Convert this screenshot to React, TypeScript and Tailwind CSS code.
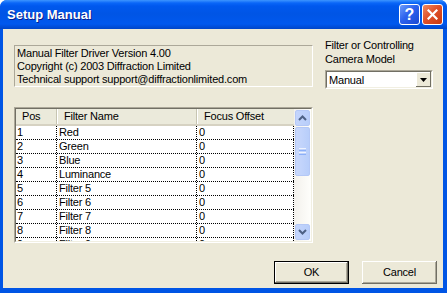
const rows = [
  ["1", "Red", "0"],
  ["2", "Green", "0"],
  ["3", "Blue", "0"],
  ["4", "Luminance", "0"],
  ["5", "Filter 5", "0"],
  ["6", "Filter 6", "0"],
  ["7", "Filter 7", "0"],
  ["8", "Filter 8", "0"],
  ["9", "Filter 9", "0"],
]

function TitleButton({ kind }: { kind: "help" | "close" }) {
  const bg =
    kind === "help"
      ? "bg-[linear-gradient(135deg,#6d9cfb_0%,#2c62ee_45%,#1a48d2_100%)]"
      : "bg-[linear-gradient(135deg,#f08a62_0%,#e0512a_45%,#c9380f_100%)]"
  return (
    <div className={`w-[21px] h-[21px] rounded-[3px] border border-white flex items-center justify-center ${bg}`}>
      {kind === "help" ? (
        <span className="text-white font-bold text-[16px] leading-none font-['Liberation_Sans',Arial,sans-serif]">?</span>
      ) : (
        <svg width="11" height="11" viewBox="0 0 11 11">
          <path d="M1.5 1.5 L9.5 9.5 M9.5 1.5 L1.5 9.5" stroke="white" strokeWidth="2.2" strokeLinecap="square" />
        </svg>
      )}
    </div>
  )
}

function ScrollButton({ dir }: { dir: "up" | "down" }) {
  return (
    <div className="h-[16px] w-full rounded-[2px] border border-[#b4c8f6] bg-[linear-gradient(to_right,#c4d5fc,#b8cefa)] flex items-center justify-center">
      <svg width="9" height="6" viewBox="0 0 9 6">
        <path
          d={dir === "up" ? "M1 5 L4.5 1.5 L8 5" : "M1 1 L4.5 4.5 L8 1"}
          stroke="#4d6185"
          strokeWidth="2"
          fill="none"
        />
      </svg>
    </div>
  )
}

export default function App() {
  return (
    <div className="w-[447px] h-[293px] flex flex-col bg-[#0055e5] rounded-t-[7px] overflow-hidden font-['Liberation_Sans',Arial,sans-serif] text-[11px] text-black">
      {/* title bar */}
      <div className="h-[29px] shrink-0 flex items-center pl-[7px] pr-[4px] bg-[linear-gradient(to_bottom,#3d95ff_0px,#0a66f8_3px,#0058ee_6px,#0055e5_14px,#0058ee_24px,#0045c8_29px)]">
        <span className="text-white font-bold text-[13px] [text-shadow:1px_1px_#0a1e8c]">Setup Manual</span>
        <div className="ml-auto flex gap-[2px]">
          <TitleButton kind="help" />
          <TitleButton kind="close" />
        </div>
      </div>

      {/* body */}
      <div className="flex-1 ml-[3px] mr-[4px] mb-[5px] bg-[#ece9d8] pt-[9px] pl-[11px] flex flex-col tracking-[-0.2px]">
        <div className="flex h-[50px] items-start">
          <div className="mt-[7px] w-[299px] h-[42px] border border-t-[#aca899] border-l-[#aca899] border-b-white border-r-white pl-[2px] pt-[1px] leading-[13px]">
            <div>Manual Filter Driver Version 4.00</div>
            <div>Copyright (c) 2003 Diffraction Limited</div>
            <div>Technical support support@diffractionlimited.com</div>
          </div>
          <div className="ml-[12px] w-[108px] leading-[14px]">
            <div>Filter or Controlling</div>
            <div>Camera Model</div>
            <div className="mt-[4px] h-[19px] border border-t-[#aca899] border-l-[#aca899] border-b-white border-r-white">
              <div className="h-full border border-t-[#716f64] border-l-[#716f64] border-b-[#f1efe2] border-r-[#f1efe2] bg-white flex items-center">
                <span className="pl-[2px] flex-1">Manual</span>
                <div className="w-[15px] h-full bg-[#ece9d8] shadow-[inset_-1px_-1px_0_#716f64,inset_1px_1px_0_#fff] flex items-center justify-center">
                  <svg width="7" height="4" viewBox="0 0 7 4">
                    <path d="M0 0 H7 L3.5 4 Z" fill="black" />
                  </svg>
                </div>
              </div>
            </div>
          </div>
        </div>

        {/* list */}
        <div className="mt-[19px] w-[299px] h-[136px] border border-t-[#aca899] border-l-[#aca899] border-b-white border-r-white">
          <div className="h-full border border-t-[#716f64] border-l-[#716f64] border-b-[#f1efe2] border-r-[#f1efe2] bg-white flex overflow-hidden">
            <div className="w-[278px] flex flex-col overflow-hidden">
              <div className="h-[17px] shrink-0 flex bg-[#ebeadb] border-b-2 border-b-[#d6d2c2]">
                <div className="w-[41px] pl-[6px] leading-[15px] border-r border-r-[#c7c5b2]">Pos</div>
                <div className="w-[140px] pl-[6px] leading-[15px] border-r border-r-[#c7c5b2] border-l border-l-white">Filter Name</div>
                <div className="w-[97px] pl-[6px] leading-[15px] border-l border-l-white">Focus Offset</div>
              </div>
              {rows.map((r) => (
                <div key={r[0]} className="h-[14px] shrink-0 flex border-b border-dotted border-b-black leading-[13px]">
                  <div className="w-[41px] pl-[1px] border-r border-dotted border-r-black">{r[0]}</div>
                  <div className="w-[140px] pl-[2px] border-r border-dotted border-r-black">{r[1]}</div>
                  <div className="w-[97px] pl-[2px] border-r border-dotted border-r-black">{r[2]}</div>
                </div>
              ))}
            </div>
            <div className="w-[17px] h-full flex flex-col p-[1px] bg-[linear-gradient(to_right,#f3f1ec,#fefefb)]">
              <ScrollButton dir="up" />
              <div className="mt-[1px] h-[49px] rounded-[2px] border border-[#b4c8f6] bg-[linear-gradient(to_right,#c9d8fc,#b8cefa)] flex flex-col items-center justify-center gap-[1px]">
                <div className="w-[7px] h-[1px] bg-[#eef3fe]" />
                <div className="w-[7px] h-[1px] bg-[#8cb0f8]" />
                <div className="w-[7px] h-[1px] bg-[#eef3fe]" />
                <div className="w-[7px] h-[1px] bg-[#8cb0f8]" />
              </div>
              <div className="flex-1" />
              <ScrollButton dir="down" />
            </div>
          </div>
        </div>

        {/* buttons */}
        <div className="mt-[18px] flex justify-end pr-[6px] gap-[13px]">
          <button className="w-[75px] h-[23px] border border-black bg-[#ece9d8] shadow-[inset_-1px_-1px_0_#716f64,inset_1px_1px_0_#fff,inset_-2px_-2px_0_#aca899] text-[11px]">
            OK
          </button>
          <button className="w-[75px] h-[23px] bg-[#ece9d8] shadow-[inset_-1px_-1px_0_#716f64,inset_1px_1px_0_#fff,inset_-2px_-2px_0_#aca899] text-[11px]">
            Cancel
          </button>
        </div>
      </div>
    </div>
  )
}
